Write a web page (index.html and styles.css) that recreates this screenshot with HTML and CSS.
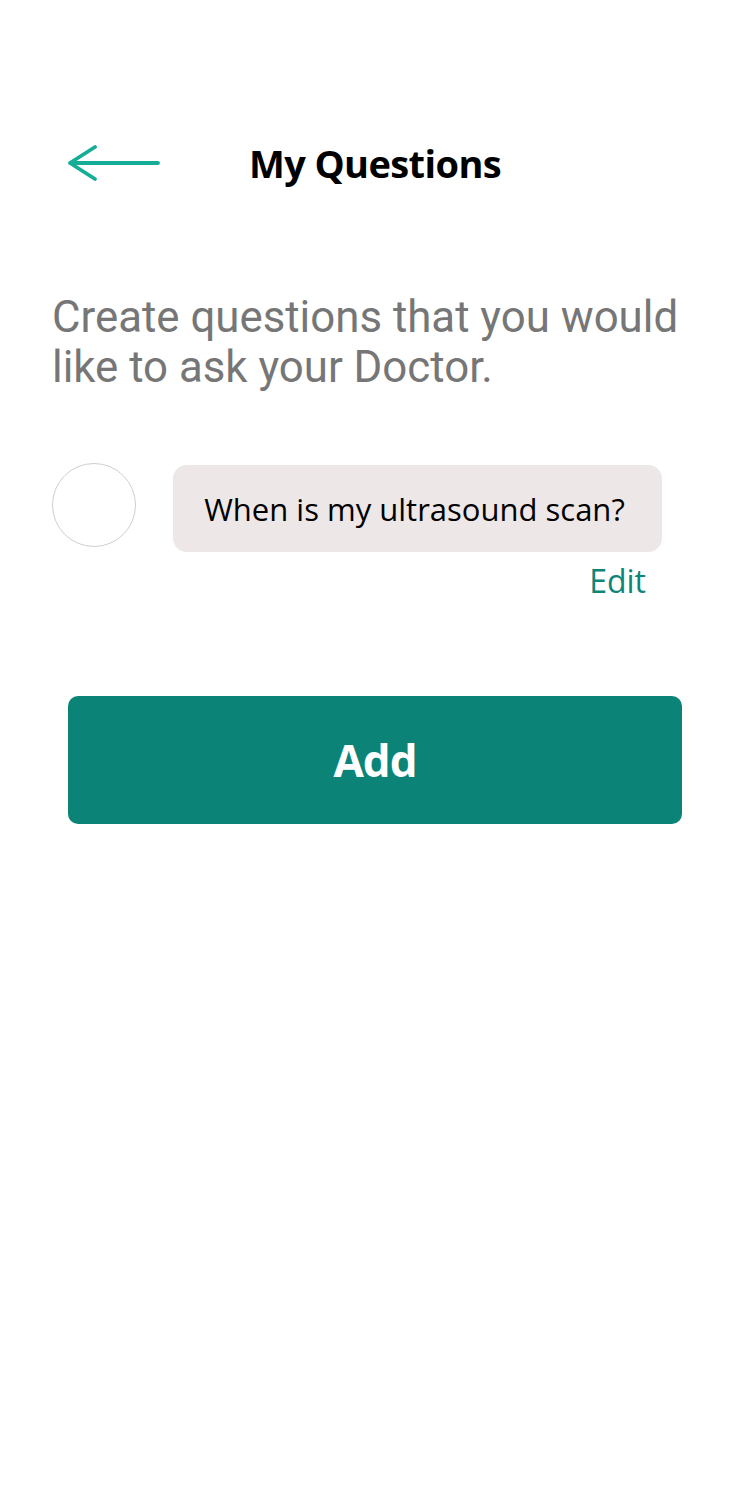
FILE: index.html
```html
<!DOCTYPE html>
<html lang="en">
<head>
<meta charset="utf-8">
<title>My Questions</title>
<link rel="stylesheet" href="styles.css">
</head>
<body>
<div class="screen">
  <header class="topbar">
    <div class="back">
      <svg class="back-icon" width="92" height="38" viewBox="0 0 92 38" aria-hidden="true">
        <path d="M2 19 H90 M27 3 L2 19 L27 35" fill="none" stroke="#15ad97" stroke-width="3.8" stroke-linecap="round" stroke-linejoin="round"/>
      </svg>
    </div>
    <h1 class="title">My Questions</h1>
    <div class="spacer"></div>
  </header>

  <p class="intro">Create questions that you would like to ask your Doctor.</p>

  <div class="question">
    <div class="check"></div>
    <div class="q-body">
      <div class="bubble">When is my ultrasound scan?</div>
      <div class="edit">Edit</div>
    </div>
  </div>

  <div class="actions">
    <button class="add-btn">Add</button>
  </div>
</div>
</body>
</html>
```

FILE: styles.css
```css
html, body {
  margin: 0;
  padding: 0;
  background: #ffffff;
}

.screen {
  width: 750px;
  min-height: 1500px;
  font-family: "Open Sans", "Noto Sans", sans-serif;
}

.topbar {
  display: grid;
  grid-template-columns: 1fr auto 1fr;
  align-items: center;
  padding-top: 128px;
  height: 70px;
}

.back {
  padding-left: 68px;
  display: flex;
  align-items: center;
}

.back-icon {
  display: block;
}

.title {
  margin: 0;
  font-size: 38px;
  font-weight: 700;
  color: #000000;
  letter-spacing: -0.6px;
}

.intro {
  margin: 94px 52px 0 52px;
  font-family: Roboto, sans-serif;
  font-size: 43.8px;
  line-height: 50px;
  color: #767676;
}

.question {
  display: flex;
  align-items: flex-start;
  margin-top: 73px;
  padding-left: 52px;
}

.check {
  box-sizing: border-box;
  width: 84px;
  height: 84px;
  border: 1.5px solid #cfcfcf;
  border-radius: 50%;
  flex: none;
  margin-top: -2px;
}

.q-body {
  margin-left: 37px;
  width: 489px;
  display: flex;
  flex-direction: column;
  align-items: flex-end;
}

.bubble {
  box-sizing: border-box;
  width: 489px;
  height: 87px;
  background: #ede7e7;
  border-radius: 14px;
  display: flex;
  align-items: center;
  justify-content: center;
  font-size: 31px;
  color: #000000;
  padding-right: 6px;
}

.edit {
  margin-top: 10px;
  margin-right: 16px;
  font-size: 32px;
  color: #0d8578;
  line-height: 38px;
}

.actions {
  padding: 0 68px;
  margin-top: 96px;
}

.add-btn {
  display: flex;
  align-items: center;
  justify-content: center;
  width: 614px;
  height: 128px;
  border: none;
  border-radius: 10px;
  background: #0b8477;
  color: #ffffff;
  font-family: "Open Sans", "Noto Sans", sans-serif;
  font-size: 44px;
  font-weight: 700;
  letter-spacing: -1px;
  padding: 0;
}
```
